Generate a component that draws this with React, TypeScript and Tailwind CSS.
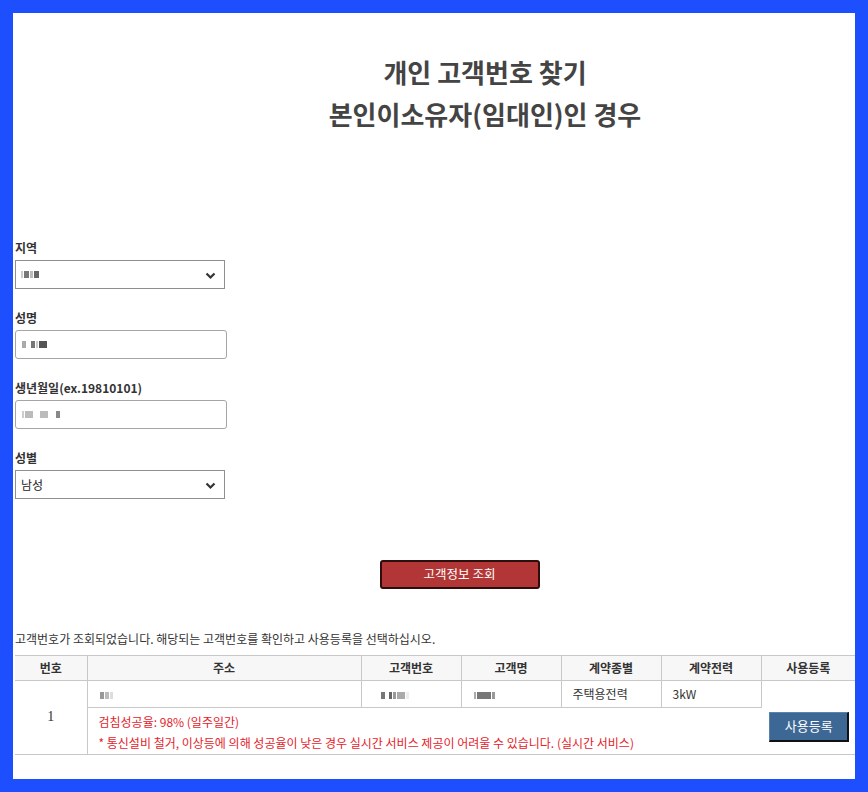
import React from 'react';

const FONT = "font-['Noto_Sans_CJK_KR','Noto_Sans',sans-serif]";

// 흐리게 처리된 개인정보 흉내
const Blur = ({ blocks }: { blocks: { w: number; c: string }[] }) => (
  <span className="inline-flex items-center gap-[1px] align-middle">
    {blocks.map((b, i) => (
      <span key={i} className="inline-block h-[7px]" style={{ width: b.w, background: b.c }} />
    ))}
  </span>
);

const Chevron = () => (
  <svg className="absolute right-[8px] top-[11px] pointer-events-none" width="11" height="8" viewBox="0 0 11 8">
    <path d="M1.5 1.5 L5.5 5.5 L9.5 1.5" fill="none" stroke="#333" strokeWidth="2.2" />
  </svg>
);

const Label = ({ children }: { children: React.ReactNode }) => (
  <div className="text-[12px] font-bold text-[#333] leading-[18px] mb-[3px]">{children}</div>
);

const SelectBox = ({ children }: { children: React.ReactNode }) => (
  <div className="relative w-[210px] h-[29px] border border-[#8f8f8f] bg-white flex items-center pl-[5px] text-[12px] text-[#222]">
    {children}
    <Chevron />
  </div>
);

const InputBox = ({ children }: { children: React.ReactNode }) => (
  <div className="w-[212px] h-[29px] border border-[#a5a5a5] rounded-[3px] bg-white flex items-center pl-[6px]">
    {children}
  </div>
);

export default function App() {
  return (
    <div className={`w-[868px] h-[792px] bg-[#1e4fff] p-[13px] ${FONT}`}>
      <div className="w-full h-full bg-white flex flex-col pl-[2px]">
        <div className="pt-[38px] pl-[100px] text-center text-[#444] font-bold text-[26px] leading-[42px]">
          <div>개인 고객번호 찾기</div>
          <div>본인이소유자(임대인)인 경우</div>
        </div>

        <div className="mt-[104px] flex flex-col gap-[20px]">
          <div>
            <Label>지역</Label>
            <SelectBox>
              <Blur blocks={[{ w: 2, c: '#ccc' }, { w: 5, c: '#777' }, { w: 3, c: '#bbb' }, { w: 5, c: '#666' }]} />
            </SelectBox>
          </div>
          <div>
            <Label>성명</Label>
            <InputBox>
              <Blur blocks={[{ w: 4, c: '#aaa' }, { w: 3, c: '#fff' }, { w: 4, c: '#777' }, { w: 2, c: '#ccc' }, { w: 8, c: '#555' }]} />
            </InputBox>
          </div>
          <div>
            <Label>생년월일(ex.19810101)</Label>
            <InputBox>
              <Blur blocks={[{ w: 2, c: '#ccc' }, { w: 8, c: '#bbb' }, { w: 5, c: '#fff' }, { w: 8, c: '#bbb' }, { w: 6, c: '#fff' }, { w: 4, c: '#888' }]} />
            </InputBox>
          </div>
          <div>
            <Label>성별</Label>
            <SelectBox>남성</SelectBox>
          </div>
        </div>

        <div className="mt-[61px] flex justify-center pl-[49px]">
          <button className="w-[160px] h-[29px] bg-[#b33636] border-2 border-[#2e0d0d] rounded-[3px] text-white text-[12.5px]">
            고객정보 조회
          </button>
        </div>

        <div className="mt-[41px] text-[12px] text-[#333] leading-[18px]">
          고객번호가 조회되었습니다. 해당되는 고객번호를 확인하고 사용등록을 선택하십시오.
        </div>

        <table className="mt-[7px] w-[840px] border-collapse table-fixed text-[12px] text-[#333]">
          <colgroup>
            <col className="w-[72px]" />
            <col className="w-[274px]" />
            <col className="w-[100px]" />
            <col className="w-[100px]" />
            <col className="w-[100px]" />
            <col className="w-[100px]" />
            <col className="w-[94px]" />
          </colgroup>
          <thead>
            <tr className="h-[25px] bg-[#f7f7f7]">
              {['번호', '주소', '고객번호', '고객명', '계약종별', '계약전력', '사용등록'].map((h, i) => (
                <th
                  key={h}
                  className={`font-bold border-y border-[#c8c8c8] ${i > 0 ? 'border-l' : ''}`}
                >
                  {h}
                </th>
              ))}
            </tr>
          </thead>
          <tbody>
            <tr className="h-[27px]">
              <td rowSpan={2} className="text-center border-b border-[#c8c8c8] font-['Liberation_Serif',serif] text-[14px] pb-[2px]">
                1
              </td>
              <td className="border-l border-b border-[#c8c8c8] pl-[12px]">
                <Blur blocks={[{ w: 4, c: '#999' }, { w: 4, c: '#bbb' }, { w: 3, c: '#ddd' }]} />
              </td>
              <td className="border-l border-b border-[#c8c8c8] pl-[19px]">
                <Blur blocks={[{ w: 4, c: '#777' }, { w: 2, c: '#fff' }, { w: 3, c: '#666' }, { w: 3, c: '#999' }, { w: 8, c: '#aaa' }, { w: 3, c: '#eee' }]} />
              </td>
              <td className="border-l border-b border-[#c8c8c8] pl-[12px]">
                <Blur blocks={[{ w: 2, c: '#aaa' }, { w: 14, c: '#777' }, { w: 3, c: '#999' }]} />
              </td>
              <td className="border-l border-b border-[#c8c8c8] pl-[11px]">주택용전력</td>
              <td className="border-l border-r border-b border-[#c8c8c8] pl-[11px]">3kW</td>
              <td rowSpan={2} className="border-b border-[#c8c8c8] align-middle">
                <div className="flex justify-center pt-[18px] pl-[2px]">
                  <button className="w-[80px] h-[30px] bg-[#3d6895] border border-[#5b82ad] border-r-2 border-b-2 border-r-[#111] border-b-[#111] text-white text-[13px]">
                    사용등록
                  </button>
                </div>
              </td>
            </tr>
            <tr className="h-[47px]">
              <td colSpan={5} className="border-l border-b border-[#c8c8c8] pl-[11px] text-[#e5222a] leading-[21px] pt-[1px]">
                <div>검침성공율: 98% (일주일간)</div>
                <div>* 통신설비 철거, 이상등에 의해 성공율이 낮은 경우 실시간 서비스 제공이 어려울 수 있습니다. (실시간 서비스)</div>
              </td>
            </tr>
          </tbody>
        </table>
      </div>
    </div>
  );
}
